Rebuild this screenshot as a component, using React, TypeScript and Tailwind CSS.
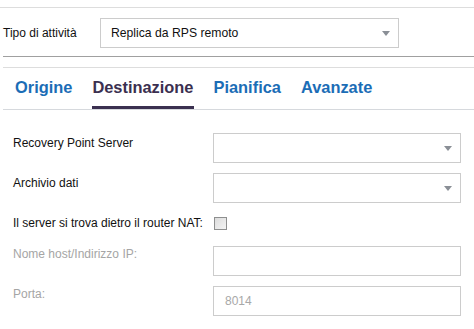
const Arrow = () => (
    <svg width="8" height="5" viewBox="0 0 8 5" className="absolute right-[8px] top-[12px]">
        <path d="M0 0 H8 L4 5 Z" fill="#8a8f96" />
    </svg>
);

const Box = ({ select = false, value = "" }: { select?: boolean, value?: string }) => (
    <div className="relative w-[248px] h-[30px] border border-[#cccccc] bg-white text-[12px] leading-[28px] pl-[11px] text-[#a8a8a8]">
        {value}
        {select && <Arrow />}
    </div>
);

const Row = ({ label, muted = false, children }: { label: string, muted?: boolean, children: React.ReactNode }) => (
    <div className="flex">
        <div className={`w-[200px] text-[12px] leading-[14px] ${muted ? "pt-[1px] text-[#a5a5a5]" : "pt-[3px] text-[#111]"}`}>
            {label}
        </div>
        {children}
    </div>
);

export default function App() {
    const tabs = ["Origine", "Destinazione", "Pianifica", "Avanzate"];
    const active = "Destinazione";

    return (
        <div className="w-[474px] h-[329px] bg-white overflow-hidden" style={{ fontFamily: '"Liberation Sans", Arial, sans-serif' }}>
            <div className="mt-[7px] border-t border-[#dddddd]" />

            <div className="flex items-center pt-[10px] pl-[3px]">
                <div className="w-[97px] text-[12px] text-[#111]">Tipo di attività</div>
                <div className="relative w-[299px] h-[30px] border border-[#cccccc] text-[12.2px] leading-[28px] pl-[10px] text-[#111]">
                    Replica da RPS remoto
                    <Arrow />
                </div>
            </div>

            <div className="mt-[8px] ml-[3px] border-t border-[#a0a0a0]" />
            <div className="mt-[10px] ml-[3px] border-t border-[#dddddd]" />

            <div className="ml-[3px] border-b border-[#d6d9dd] flex gap-[20px] pl-[12px]">
                {tabs.map((t) => (
                    <div
                        key={t}
                        className={`pt-[10px] pb-[10px] text-[16.4px] leading-[18px] font-bold border-b-[3px] ${
                            t === active ? "text-[#3b3050] border-[#3b3050]" : "text-[#1b6db6] border-transparent"
                        }`}
                    >
                        {t}
                    </div>
                ))}
            </div>

            <div className="pl-[13px] pt-[23px] flex flex-col">
                <Row label="Recovery Point Server">
                    <Box select />
                </Row>
                <div className="h-[10px]" />
                <Row label="Archivio dati">
                    <Box select />
                </Row>
                <div className="flex items-center mt-[13px] h-[14px]">
                    <div className="w-[200px] text-[12px] text-[#111]">Il server si trova dietro il router NAT:</div>
                    <div className="ml-[1px] w-[13px] h-[13px] border border-[#8e8f8f] bg-gradient-to-br from-[#dcdcdc] to-[#f4f4f4]" />
                </div>
                <div className="h-[16px]" />
                <Row label="Nome host/Indirizzo IP:" muted>
                    <Box />
                </Row>
                <div className="h-[10px]" />
                <Row label="Porta:" muted>
                    <Box value="8014" />
                </Row>
            </div>
        </div>
    );
}
